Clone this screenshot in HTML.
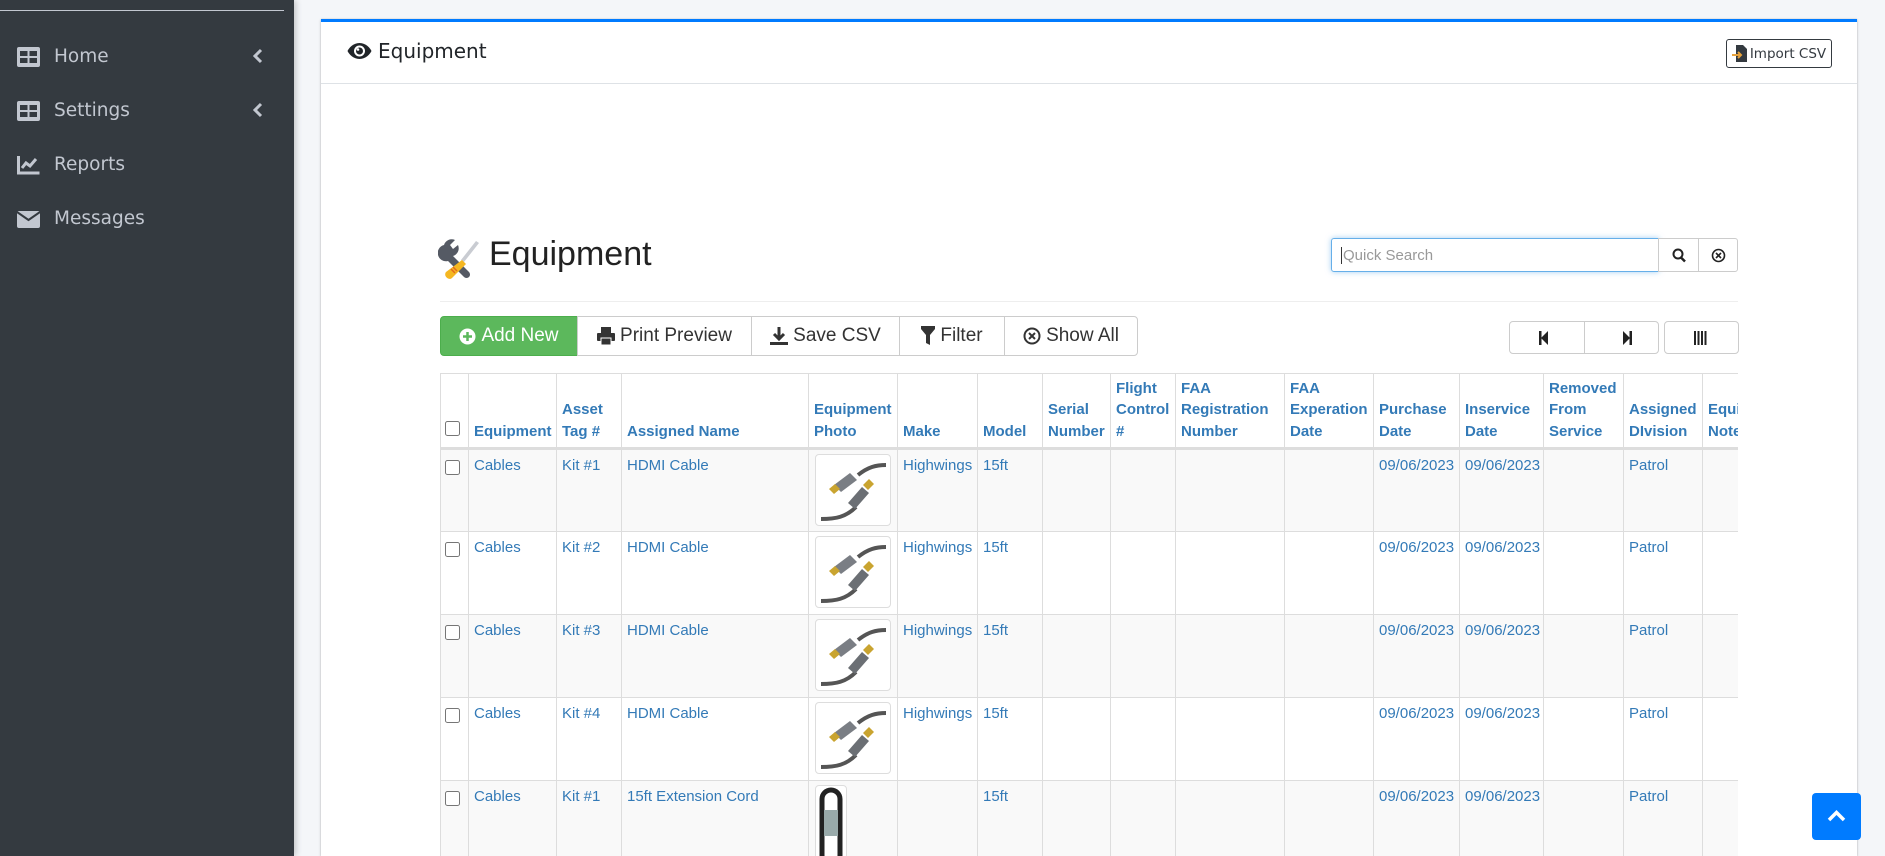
<!DOCTYPE html>
<html><head><meta charset="utf-8"><style>
*{box-sizing:border-box;margin:0;padding:0}
html{width:1885px;height:856px;overflow:hidden}
body{width:1885px;height:856px;overflow:hidden;background:#f4f6f9;font-family:"Liberation Sans",Arial,sans-serif;position:relative}
.side{position:absolute;left:0;top:0;width:294px;height:856px;background:#343a40;box-shadow:2px 0 6px rgba(0,0,0,.2)}
.side .line{position:absolute;left:0;top:10px;width:284px;height:1px;background:#c2c7d0}
.mi{position:absolute;left:0;width:294px;height:30px;color:#c2c7d0;font-family:"DejaVu Sans","Liberation Sans",sans-serif;font-size:18.5px}
.mi svg{position:absolute;left:17px;top:4px}
.mi span{position:absolute;left:54px;top:3px}
.mi .ch{position:absolute;left:253px;top:5px}
.card{position:absolute;left:321px;top:19px;width:1536px;height:837px;background:#fff;border-top:3px solid #007bff;box-shadow:0 0 1px rgba(0,0,0,.2),0 1px 3px rgba(0,0,0,.2)}
.ch1{position:absolute;left:0;top:0;width:100%;height:62px;border-bottom:1px solid #dee2e6}
.ch1 .t{position:absolute;left:26px;top:17px;font-family:"DejaVu Sans",sans-serif;font-size:20px;color:#212529;display:flex;align-items:center;gap:6px}
.imp{position:absolute;left:1405px;top:17px;width:106px;height:29px;border:1px solid #343a40;border-radius:3px;font-family:"DejaVu Sans",sans-serif;font-size:13.5px;color:#343a40;display:flex;align-items:center;justify-content:center;gap:3px}
.abs{position:absolute}
.btn{position:absolute;top:316px;height:40px;border:1px solid #ccc;background:#fff;font-size:19px;color:#333;display:flex;align-items:center;justify-content:center;gap:5px}
.wrap{position:absolute;left:440px;top:373px;width:1298px;height:483px;overflow:hidden}
table{position:absolute;left:0;top:0;width:1352px;border-collapse:collapse;table-layout:fixed;font-size:15px}
th,td{border:1px solid #ddd;vertical-align:bottom;text-align:left;padding:0 5px;color:#337ab7;overflow:hidden}
th{font-weight:bold;height:75px;line-height:21.5px;padding-bottom:5px;border-bottom:3px solid #ddd}
td{vertical-align:top;height:83px;padding-top:7px;line-height:18px}
tr.o td{background:#f9f9f9}
input[type=checkbox]{width:15px;height:15px;margin-top:3px}
.ph{width:76px;height:72px;border:1px solid #ddd;border-radius:4px;background:#fff;margin-top:-3px;margin-left:1px;overflow:hidden}
</style></head><body>
<div class="side"><div class="line"></div>
<div class="mi" style="top:43px"><svg width="23" height="20" viewBox="0 0 23 20"><rect width="23" height="20" rx="2" fill="#c2c7d0"/><rect x="3" y="4" width="7.5" height="5" fill="#343a40"/><rect x="12.5" y="4" width="7.5" height="5" fill="#343a40"/><rect x="3" y="11" width="7.5" height="5" fill="#343a40"/><rect x="12.5" y="11" width="7.5" height="5" fill="#343a40"/></svg><span>Home</span><svg class="ch" width="10" height="16" viewBox="0 0 10 16"><path d="M8 2 2 8l6 6" stroke="#c2c7d0" stroke-width="3" fill="none"/></svg></div>
<div class="mi" style="top:97px"><svg width="23" height="20" viewBox="0 0 23 20"><rect width="23" height="20" rx="2" fill="#c2c7d0"/><rect x="3" y="4" width="7.5" height="5" fill="#343a40"/><rect x="12.5" y="4" width="7.5" height="5" fill="#343a40"/><rect x="3" y="11" width="7.5" height="5" fill="#343a40"/><rect x="12.5" y="11" width="7.5" height="5" fill="#343a40"/></svg><span>Settings</span><svg class="ch" width="10" height="16" viewBox="0 0 10 16"><path d="M8 2 2 8l6 6" stroke="#c2c7d0" stroke-width="3" fill="none"/></svg></div>
<div class="mi" style="top:151px"><svg width="23" height="20" viewBox="0 0 23 20"><path d="M1.5 1v17h21" stroke="#c2c7d0" stroke-width="3" fill="none"/><path d="M5 13l4-5 4 3 6-7" stroke="#c2c7d0" stroke-width="3" fill="none"/></svg><span>Reports</span></div>
<div class="mi" style="top:205px"><svg width="23" height="20" viewBox="0 0 23 20"><rect y="2" width="23" height="17" rx="2" fill="#c2c7d0"/><path d="M0 3l11.5 8L23 3" stroke="#343a40" stroke-width="2" fill="none"/></svg><span>Messages</span></div>
</div>

<div class="card"><div class="ch1">
<div class="t"><svg width="25" height="18" viewBox="0 0 25 18"><path d="M12.5 1C6 1 2 6 .5 9 2 12 6 17 12.5 17S23 12 24.5 9C23 6 19 1 12.5 1z" fill="#212529"/><circle cx="12.5" cy="9" r="5.5" fill="#fff"/><circle cx="12.5" cy="9" r="3.5" fill="#212529"/><circle cx="11" cy="7.5" r="1.3" fill="#fff"/></svg>Equipment</div>
<div class="imp"><svg width="15" height="17" viewBox="0 0 15 17"><path d="M4 0h7l4 4v13H4z" fill="#343a40"/><path d="M0 10h9M6 7l3 3-3 3" stroke="#e8a33c" stroke-width="2" fill="none"/></svg>Import CSV</div>
</div></div>

<svg class="abs" style="left:438px;top:235px" width="46" height="46" viewBox="0 0 46 46"><path d="M6 10a8 8 0 0 1 11-5l-5 5 3 4 5-4a8 8 0 0 1-5 11l16 16a3.5 3.5 0 0 1-5 5L10 26A8 8 0 0 1 6 10z" fill="#555a64"/><path d="M38 6l3 2-15 19-3-2z" fill="#c9ccd2"/><path d="M24 25l4 4-14 14c-3 3-9-2-6-6z" fill="#f5b721"/><path d="M13 34l4 4M15 32l4 4" stroke="#e36a1e" stroke-width="1.5"/></svg>
<div class="abs" style="left:489px;top:235px;font-size:34px;color:#222;font-family:'Liberation Sans',sans-serif">Equipment</div>
<div class="abs" style="left:440px;top:301px;width:1298px;height:1px;background:#eee"></div>

<div class="abs" style="left:1331px;top:238px;width:328px;height:34px;border:1px solid #66afe9;border-radius:3px 0 0 3px;box-shadow:0 0 6px rgba(102,175,233,.6);font-size:15px;color:#999;padding:8px 9px"><span style="border-left:1px solid #333;padding-left:1px">Quick Search</span></div>
<div class="abs" style="left:1658px;top:238px;width:80px;height:34px;border:1px solid #ccc;border-radius:0 3px 3px 0;background:#fff"><div style="position:absolute;left:39px;top:0;width:1px;height:32px;background:#ccc"></div>
<svg style="position:absolute;left:13px;top:9px" width="14" height="15" viewBox="0 0 14 15"><circle cx="6" cy="6" r="4.5" stroke="#222" stroke-width="2" fill="none"/><path d="M9 9.5l4 4" stroke="#222" stroke-width="2.5"/></svg>
<svg style="position:absolute;left:52px;top:9px" width="15" height="15" viewBox="0 0 15 15"><circle cx="7.5" cy="7.5" r="6" stroke="#222" stroke-width="1.6" fill="none"/><path d="M5 5l5 5M10 5l-5 5" stroke="#222" stroke-width="1.6"/></svg></div>

<div class="btn" style="left:440px;width:138px;background:#5cb85c;border-color:#4cae4c;color:#fff;border-radius:4px 0 0 4px"><svg width="17" height="17" viewBox="0 0 17 17"><circle cx="8.5" cy="8.5" r="8" fill="#fff"/><path d="M8.5 4v9M4 8.5h9" stroke="#5cb85c" stroke-width="2.5"/></svg>Add New</div>
<div class="btn" style="left:577px;width:175px"><svg width="18" height="18" viewBox="0 0 18 18"><rect x="4" y="0" width="10" height="6" fill="#333"/><rect x="0" y="6" width="18" height="8" rx="1" fill="#333"/><rect x="4" y="11" width="10" height="7" fill="#333" stroke="#fff" stroke-width="1"/></svg>Print Preview</div>
<div class="btn" style="left:751px;width:149px"><svg width="18" height="20" viewBox="0 0 18 20"><path d="M9 1v12M4 8l5 5 5-5" stroke="#333" stroke-width="3" fill="none"/><rect x="0" y="16" width="18" height="3" fill="#333"/></svg>Save CSV</div>
<div class="btn" style="left:899px;width:106px"><svg width="14" height="20" viewBox="0 0 14 20"><path d="M0 0h14v3L9 9v10l-4-2V9L0 3z" fill="#333"/></svg>Filter</div>
<div class="btn" style="left:1004px;width:134px;border-radius:0 4px 4px 0"><svg width="18" height="18" viewBox="0 0 18 18"><circle cx="9" cy="9" r="7.5" stroke="#333" stroke-width="2" fill="none"/><path d="M6 6l6 6M12 6l-6 6" stroke="#333" stroke-width="2"/></svg>Show All</div>

<div class="abs" style="left:1509px;top:321px;width:150px;height:33px;border:1px solid #ccc;border-radius:4px;background:#fff"><div style="position:absolute;left:74px;top:0;width:1px;height:31px;background:#ccc"></div>
<svg style="position:absolute;left:29px;top:9px" width="10" height="14" viewBox="0 0 10 14"><rect width="2.5" height="14" fill="#222"/><path d="M9 0v14L2 7z" fill="#222"/></svg>
<svg style="position:absolute;left:112px;top:9px" width="10" height="14" viewBox="0 0 10 14"><rect x="7.5" width="2.5" height="14" fill="#222"/><path d="M1 0v14l7-7z" fill="#222"/></svg></div>
<div class="abs" style="left:1664px;top:321px;width:75px;height:33px;border:1px solid #ccc;border-radius:4px;background:#fff"><svg style="position:absolute;left:29px;top:9px" width="14" height="14" viewBox="0 0 14 14"><path d="M1 0v14M4.5 0v14M8 0v14M11.5 0v14" stroke="#222" stroke-width="2"/></svg></div>

<div class="wrap"><table>
<colgroup><col style="width:28px"><col style="width:88px"><col style="width:65px"><col style="width:187px"><col style="width:89px"><col style="width:80px"><col style="width:65px"><col style="width:68px"><col style="width:65px"><col style="width:109px"><col style="width:89px"><col style="width:86px"><col style="width:84px"><col style="width:80px"><col style="width:79px"><col style="width:90px"></colgroup>
<tr><th style="padding-left:4px"><input type="checkbox"></th><th>Equipment</th><th>Asset Tag #</th><th>Assigned Name</th><th>Equipment Photo</th><th>Make</th><th>Model</th><th>Serial Number</th><th>Flight Control #</th><th>FAA Registration Number</th><th>FAA Experation Date</th><th>Purchase Date</th><th>Inservice Date</th><th>Removed From Service</th><th>Assigned DIvision</th><th>Equipment Notes</th></tr>
<tr class="o"><td style="padding-left:4px"><input type="checkbox"></td><td>Cables</td><td>Kit #1</td><td>HDMI Cable</td><td><div class="ph"><svg width="76" height="72" viewBox="0 0 76 72"><path d="M5 64c15 0 25-2 35-12M70 10c-10 0-18 2-28 10" stroke="#555" stroke-width="4" fill="none"/><path d="M18 30l16-12 7 7-16 12z" fill="#7a7e84"/><path d="M13 34l6-5 5 5-6 5z" fill="#c9a430"/><path d="M32 48l14-16 7 6-14 16z" fill="#6b6f74"/><path d="M47 30l6-6 5 5-6 6z" fill="#c9a430"/></svg></div></td><td>Highwings</td><td>15ft</td><td></td><td></td><td></td><td></td><td>09/06/2023</td><td>09/06/2023</td><td></td><td>Patrol</td><td></td></tr>
<tr><td style="padding-left:4px"><input type="checkbox"></td><td>Cables</td><td>Kit #2</td><td>HDMI Cable</td><td><div class="ph"><svg width="76" height="72" viewBox="0 0 76 72"><path d="M5 64c15 0 25-2 35-12M70 10c-10 0-18 2-28 10" stroke="#555" stroke-width="4" fill="none"/><path d="M18 30l16-12 7 7-16 12z" fill="#7a7e84"/><path d="M13 34l6-5 5 5-6 5z" fill="#c9a430"/><path d="M32 48l14-16 7 6-14 16z" fill="#6b6f74"/><path d="M47 30l6-6 5 5-6 6z" fill="#c9a430"/></svg></div></td><td>Highwings</td><td>15ft</td><td></td><td></td><td></td><td></td><td>09/06/2023</td><td>09/06/2023</td><td></td><td>Patrol</td><td></td></tr>
<tr class="o"><td style="padding-left:4px"><input type="checkbox"></td><td>Cables</td><td>Kit #3</td><td>HDMI Cable</td><td><div class="ph"><svg width="76" height="72" viewBox="0 0 76 72"><path d="M5 64c15 0 25-2 35-12M70 10c-10 0-18 2-28 10" stroke="#555" stroke-width="4" fill="none"/><path d="M18 30l16-12 7 7-16 12z" fill="#7a7e84"/><path d="M13 34l6-5 5 5-6 5z" fill="#c9a430"/><path d="M32 48l14-16 7 6-14 16z" fill="#6b6f74"/><path d="M47 30l6-6 5 5-6 6z" fill="#c9a430"/></svg></div></td><td>Highwings</td><td>15ft</td><td></td><td></td><td></td><td></td><td>09/06/2023</td><td>09/06/2023</td><td></td><td>Patrol</td><td></td></tr>
<tr><td style="padding-left:4px"><input type="checkbox"></td><td>Cables</td><td>Kit #4</td><td>HDMI Cable</td><td><div class="ph"><svg width="76" height="72" viewBox="0 0 76 72"><path d="M5 64c15 0 25-2 35-12M70 10c-10 0-18 2-28 10" stroke="#555" stroke-width="4" fill="none"/><path d="M18 30l16-12 7 7-16 12z" fill="#7a7e84"/><path d="M13 34l6-5 5 5-6 5z" fill="#c9a430"/><path d="M32 48l14-16 7 6-14 16z" fill="#6b6f74"/><path d="M47 30l6-6 5 5-6 6z" fill="#c9a430"/></svg></div></td><td>Highwings</td><td>15ft</td><td></td><td></td><td></td><td></td><td>09/06/2023</td><td>09/06/2023</td><td></td><td>Patrol</td><td></td></tr>
<tr class="o"><td style="padding-left:4px"><input type="checkbox"></td><td>Cables</td><td>Kit #1</td><td>15ft Extension Cord</td><td><div class="ph" style="width:32px;height:80px"><svg width="32" height="80" viewBox="0 0 32 80"><rect x="6" y="4" width="18" height="74" rx="9" stroke="#222" stroke-width="5" fill="none"/><rect x="8" y="24" width="14" height="26" fill="#9aa"/></svg></div></td><td></td><td>15ft</td><td></td><td></td><td></td><td></td><td>09/06/2023</td><td>09/06/2023</td><td></td><td>Patrol</td><td></td></tr>
</table></div>

<div class="abs" style="left:1812px;top:793px;width:49px;height:47px;background:#007bff;border-radius:4px"><svg style="position:absolute;left:15px;top:16px" width="19" height="13" viewBox="0 0 19 13"><path d="M2 11l7.5-7.5L17 11" stroke="#fff" stroke-width="3.5" fill="none"/></svg></div>
</body></html>
